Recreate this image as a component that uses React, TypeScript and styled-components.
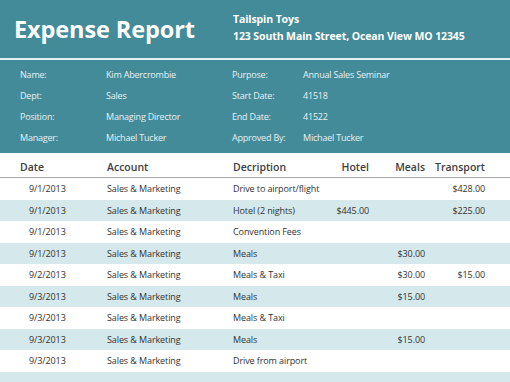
import React from "react";
import styled, { createGlobalStyle } from "styled-components";

const GlobalStyle = createGlobalStyle`
  body {
    margin: 0;
    background: #ffffff;
    font-family: "Open Sans", "Noto Sans", sans-serif;
  }
`;

const Page = styled.div`
  width: 510px;
  height: 382px;
  overflow: hidden;
  background: #ffffff;
`;

const TitleBar = styled.header`
  height: 58px;
  background: #438b99;
  display: flex;
  align-items: center;
  border-bottom: 2px solid #e4f0f2;
`;

const Title = styled.h1`
  margin: 0 0 0 14px;
  width: 219px;
  font-size: 23.5px;
  font-weight: 700;
  color: #ffffff;
  letter-spacing: -0.1px;
`;

const Company = styled.div`
  color: #ffffff;
  font-size: 10.5px;
  font-weight: 700;
  line-height: 17px;
  letter-spacing: -0.1px;
  margin-top: -2px;
`;

const InfoPanel = styled.section`
  background: #438b99;
  padding: 4px 0 5px 20px;
  display: grid;
  grid-template-columns: 86px 126px 71px 1fr;
  grid-auto-rows: 21px;
  align-items: center;
  font-size: 9px;
  letter-spacing: -0.2px;
  color: #e6f1f3;
`;

const InfoCell = styled.div`
  white-space: nowrap;
`;

const Row = styled.div<{ $striped?: boolean; $head?: boolean }>`
  display: grid;
  grid-template-columns: 87px 126px 87px 49px 56px 60px;
  padding-left: 20px;
  padding-top: ${(p) => (p.$head ? "4px" : "0")};
  box-sizing: border-box;
  align-items: center;
  height: ${(p) => (p.$head ? "25px" : "21.5px")};
  background: ${(p) => (p.$striped ? "#d5e8ec" : "#ffffff")};
  border-bottom: ${(p) => (p.$head ? "1px solid #a6a6a6" : "none")};
  font-size: ${(p) => (p.$head ? "10.5px" : "9px")};
  letter-spacing: ${(p) => (p.$head ? "0" : "-0.1px")};
  font-weight: ${(p) => (p.$head ? 600 : 400)};
  color: ${(p) => (p.$head ? "#404040" : "#333333")};
  white-space: nowrap;
`;

const Cell = styled.div<{ $right?: boolean; $indent?: boolean }>`
  text-align: ${(p) => (p.$right ? "right" : "left")};
  padding-left: ${(p) => (p.$indent ? "9px" : "0")};
`;

const info = [
  ["Name:", "Kim Abercrombie", "Purpose:", "Annual Sales Seminar"],
  ["Dept:", "Sales", "Start Date:", "41518"],
  ["Position:", "Managing Director", "End Date:", "41522"],
  ["Manager:", "Michael Tucker", "Approved By:", "Michael Tucker"],
];

const rows = [
  ["9/1/2013", "Drive to airport/flight", "", "", "$428.00"],
  ["9/1/2013", "Hotel (2 nights)", "$445.00", "", "$225.00"],
  ["9/1/2013", "Convention Fees", "", "", ""],
  ["9/1/2013", "Meals", "", "$30.00", ""],
  ["9/2/2013", "Meals & Taxi", "", "$30.00", "$15.00"],
  ["9/3/2013", "Meals", "", "$15.00", ""],
  ["9/3/2013", "Meals & Taxi", "", "", ""],
  ["9/3/2013", "Meals", "", "$15.00", ""],
  ["9/3/2013", "Drive from airport", "", "", ""],
];

export default function App() {
  return (
    <Page>
      <GlobalStyle />
      <TitleBar>
        <Title>Expense Report</Title>
        <Company>
          <div>Tailspin Toys</div>
          <div>123 South Main Street, Ocean View MO 12345</div>
        </Company>
      </TitleBar>
      <InfoPanel>
        {info.map((r) =>
          r.map((t, i) => <InfoCell key={r[0] + i}>{t}</InfoCell>)
        )}
      </InfoPanel>
      <Row $head>
        <Cell>Date</Cell>
        <Cell>Account</Cell>
        <Cell>Decription</Cell>
        <Cell $right>Hotel</Cell>
        <Cell $right>Meals</Cell>
        <Cell $right>Transport</Cell>
      </Row>
      {rows.map((r, i) => (
        <Row key={i} $striped={i % 2 === 1}>
          <Cell $indent>{r[0]}</Cell>
          <Cell>Sales &amp; Marketing</Cell>
          <Cell>{r[1]}</Cell>
          <Cell $right>{r[2]}</Cell>
          <Cell $right>{r[3]}</Cell>
          <Cell $right>{r[4]}</Cell>
        </Row>
      ))}
      <Row $striped />
    </Page>
  );
}
